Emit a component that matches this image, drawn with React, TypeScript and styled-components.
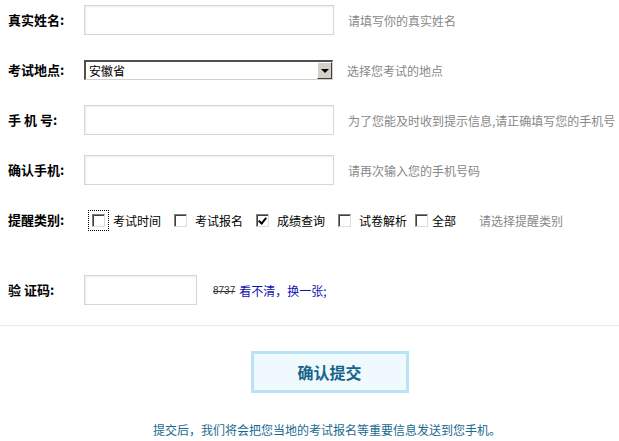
import styled, { createGlobalStyle } from 'styled-components';

const GlobalStyle = createGlobalStyle`
  html, body {
    margin: 0;
    padding: 0;
    background: #fff;
  }
  body {
    font-family: "Noto Sans CJK SC", "Liberation Sans", sans-serif;
    font-size: 12px;
    color: #000;
  }
`;

const Page = styled.div`
  width: 619px;
  padding-top: 5px;
`;

const Form = styled.div`
  display: flex;
  flex-direction: column;
  gap: 20px;
  padding-left: 8px;
`;

const Row = styled.div<{ $top?: number }>`
  display: flex;
  align-items: center;
  height: 30px;
  margin-top: ${(p) => p.$top || 0}px;
`;

const Label = styled.label`
  width: 76px;
  flex-shrink: 0;
  font-size: 13px;
  font-weight: bold;
  white-space: pre;
  line-height: 30px;
`;

const TextInput = styled.input<{ $w?: number }>`
  box-sizing: border-box;
  width: ${(p) => p.$w || 250}px;
  height: 30px;
  border: 1px solid #d6d6d6;
  background: #fff;
  box-shadow: inset 1px 1px 2px #ececec;
  padding: 0 4px;
  font-size: 12px;
  outline: none;
`;

const Hint = styled.span<{ $gap?: number }>`
  margin-left: ${(p) => p.$gap || 14}px;
  color: #888;
  font-size: 12px;
  white-space: nowrap;
`;

const SelectBox = styled.div`
  position: relative;
  box-sizing: border-box;
  width: 249px;
  height: 20px;
  border-top: 2px solid #505050;
  border-left: 2px solid #505050;
  border-right: 1px solid #d4d0c8;
  border-bottom: 1px solid #d4d0c8;
  background: #fff;
`;

const NativeSelect = styled.select`
  appearance: none;
  border: none;
  outline: none;
  background: transparent;
  width: 100%;
  height: 100%;
  padding: 0 0 0 3px;
  font-family: inherit;
  font-size: 12px;
  color: #000;
  line-height: 17px;
`;

const ArrowButton = styled.span`
  position: absolute;
  top: 0;
  right: 0;
  width: 15px;
  height: 17px;
  box-sizing: border-box;
  background: #d4d0c8;
  border-top: 1px solid #fff;
  border-left: 1px solid #fff;
  border-right: 1px solid #404040;
  border-bottom: 1px solid #404040;
  display: flex;
  align-items: center;
  justify-content: center;
  pointer-events: none;
  &::after {
    content: '';
    border-left: 4px solid transparent;
    border-right: 4px solid transparent;
    border-top: 4px solid #000;
  }
`;

const Options = styled.div`
  display: flex;
  align-items: center;
  margin-left: 4px;
`;

const Option = styled.label<{ $gap?: number }>`
  display: flex;
  align-items: center;
  margin-left: ${(p) => p.$gap ?? 0}px;
  font-size: 12px;
  white-space: nowrap;
`;

const BoxWrap = styled.span<{ $focus?: boolean; $tight?: boolean }>`
  display: inline-flex;
  align-items: center;
  justify-content: center;
  width: 21px;
  height: 21px;
  box-sizing: border-box;
  border: 1px dotted ${(p) => (p.$focus ? '#000' : 'transparent')};
  margin-right: ${(p) => (p.$tight ? 0 : 4)}px;
`;

const Check = styled.input`
  appearance: none;
  margin: 0;
  width: 13px;
  height: 13px;
  box-sizing: border-box;
  border-top: 1px solid #808080;
  border-left: 1px solid #808080;
  border-right: 1px solid #dcdcdc;
  border-bottom: 1px solid #dcdcdc;
  box-shadow: inset 1px 1px 0 #404040;
  background: #fff;
  position: relative;
  &:checked::after {
    content: '';
    position: absolute;
    left: 3px;
    top: 1px;
    width: 3px;
    height: 6px;
    border-right: 2px solid #000;
    border-bottom: 2px solid #000;
    transform: rotate(40deg);
  }
`;

const Code = styled.span`
  margin-left: 16px;
  font-family: "Liberation Sans", sans-serif;
  font-size: 10px;
  color: #333;
  text-decoration: line-through;
`;

const Refresh = styled.a`
  margin-left: 4px;
  color: #1010b0;
  font-size: 12px;
  text-decoration: none;
  cursor: pointer;
`;

const Divider = styled.hr`
  margin: 20px 0 0;
  border: none;
  border-top: 1px solid #e3eef3;
`;

const Actions = styled.div`
  display: flex;
  flex-direction: column;
  align-items: center;
  padding-top: 25px;
  padding-left: 40px;
`;

const Submit = styled.button`
  box-sizing: border-box;
  width: 158px;
  height: 42px;
  background: #eff9fe;
  border: 3px solid #b9e3f7;
  color: #16648a;
  font-family: inherit;
  font-size: 16px;
  font-weight: bold;
  cursor: pointer;
`;

const Note = styled.p`
  margin: 28px 0 0;
  padding-right: 5px;
  text-align: center;
  color: #1a6a90;
  font-size: 12px;
`;

const kinds = [
  { text: '考试时间', gap: 0, checked: false, focus: true },
  { text: '考试报名', gap: 9, checked: false },
  { text: '成绩查询', gap: 9, checked: true },
  { text: '试卷解析', gap: 9, checked: false },
  { text: '全部', gap: 4, checked: false, tight: true },
];

export default function App() {
  return (
    <Page>
      <GlobalStyle />
      <Form>
        <Row>
          <Label>真实姓名:</Label>
          <TextInput />
          <Hint>请填写你的真实姓名</Hint>
        </Row>
        <Row>
          <Label>考试地点:</Label>
          <SelectBox>
            <NativeSelect defaultValue="安徽省">
              <option>安徽省</option>
              <option>北京市</option>
              <option>上海市</option>
            </NativeSelect>
            <ArrowButton />
          </SelectBox>
          <Hint>选择您考试的地点</Hint>
        </Row>
        <Row>
          <Label>{'手 机 号:'}</Label>
          <TextInput />
          <Hint>为了您能及时收到提示信息,请正确填写您的手机号</Hint>
        </Row>
        <Row>
          <Label>确认手机:</Label>
          <TextInput />
          <Hint>请再次输入您的手机号码</Hint>
        </Row>
        <Row>
          <Label>提醒类别:</Label>
          <Options>
            {kinds.map((k) => (
              <Option key={k.text} $gap={k.gap}>
                <BoxWrap $focus={k.focus} $tight={k.tight}>
                  <Check type="checkbox" defaultChecked={k.checked} />
                </BoxWrap>
                {k.tight ? '' : ' '}
                {k.text}
              </Option>
            ))}
          </Options>
          <Hint $gap={23}>请选择提醒类别</Hint>
        </Row>
        <Row $top={20}>
          <Label>{'验 证码:'}</Label>
          <TextInput $w={113} />
          <Code>8737</Code>
          <Refresh>看不清，换一张;</Refresh>
        </Row>
      </Form>
      <Divider />
      <Actions>
        <Submit type="button">确认提交</Submit>
        <Note>提交后，我们将会把您当地的考试报名等重要信息发送到您手机。</Note>
      </Actions>
    </Page>
  );
}
